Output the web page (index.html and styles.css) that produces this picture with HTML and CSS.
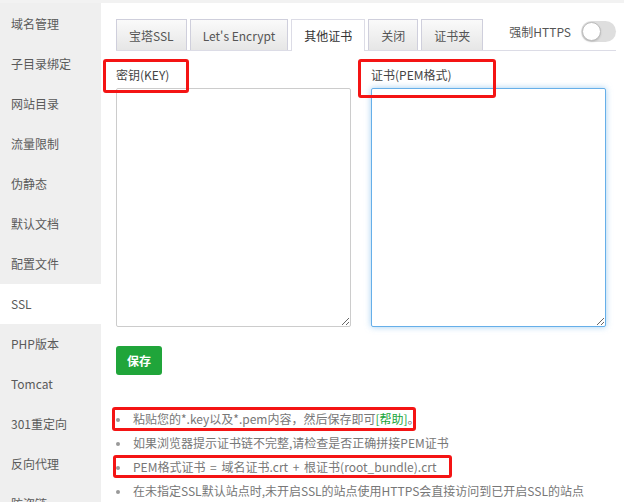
FILE: index.html
```html
<!DOCTYPE html>
<html lang="zh-cn">
<head>
    <meta charset="UTF-8">
    <meta name="viewport" content="width=device-width, initial-scale=1.0">
    <title>站点设置 - SSL</title>
    <link rel="stylesheet" href="styles.css">
</head>
<body>

    <div class="page">
        <!-- 左侧菜单 -->
        <ul class="sidebar">
            <li>域名管理</li>
            <li>子目录绑定</li>
            <li>网站目录</li>
            <li>流量限制</li>
            <li>伪静态</li>
            <li>默认文档</li>
            <li>配置文件</li>
            <li class="active">SSL</li>
            <li>PHP版本</li>
            <li>Tomcat</li>
            <li>301重定向</li>
            <li>反向代理</li>
            <li>防盗链</li>
        </ul>

        <div class="main">
            <div class="tab-bar">
                <span class="tab">宝塔SSL</span>
                <span class="tab">Let's Encrypt</span>
                <span class="tab active">其他证书</span>
                <span class="tab">关闭</span>
                <span class="tab">证书夹</span>
                <div class="force-https">
                    <span>强制HTTPS</span>
                    <span class="switch"><span class="knob"></span></span>
                </div>
            </div>

            <div class="cert-form">
                <div class="field">
                    <label class="field-label" for="key">密钥(KEY)<span class="mark mark-key"></span></label>
                    <textarea id="key"></textarea>
                </div>
                <div class="field">
                    <label class="field-label" for="csr">证书(PEM格式)<span class="mark mark-pem"></span></label>
                    <textarea id="csr" class="focused"></textarea>
                </div>
            </div>

            <button class="save-btn">保存</button>

            <ul class="tips">
                <li>粘贴您的*.key以及*.pem内容，然后保存即可<a href="#">[帮助]</a>。<span class="mark mark-tip1"></span></li>
                <li>如果浏览器提示证书链不完整,请检查是否正确拼接PEM证书</li>
                <li>PEM格式证书 = 域名证书.crt + 根证书(root_bundle).crt<span class="mark mark-tip3"></span></li>
                <li>在未指定SSL默认站点时,未开启SSL的站点使用HTTPS会直接访问到已开启SSL的站点</li>
            </ul>
        </div>
    </div>

</body>
</html>
```

FILE: styles.css
```css
html, body {
    margin: 0;
    padding: 0;
    height: 100%;
}
body {
    font-family: "Noto Sans CJK SC", "Open Sans", sans-serif;
    font-size: 12px;
    color: #555;
    background-color: #fff;
}
.page {
    display: flex;
    height: 100vh;
    overflow: hidden;
    border-top: 3px solid #f2f2f2;
    box-sizing: border-box;
}
.sidebar {
    width: 101px;
    flex-shrink: 0;
    margin: 0;
    padding: 1px 0 0 0;
    list-style: none;
    background-color: #efefef;
}
.sidebar li {
    height: 40px;
    line-height: 40px;
    padding-left: 11px;
    color: #5a5a5a;
}
.sidebar li.active {
    background-color: #fff;
}
.main {
    flex: 1;
    padding: 16px 8px 0 15px;
}
.tab-bar {
    display: flex;
    align-items: flex-end;
    border-bottom: 1px solid #dcdce6;
    height: 31px;
}
.tab {
    height: 31px;
    line-height: 31px;
    padding: 0 12px;
    margin-right: 3px;
    border: 1px solid #cfcfdc;
    border-bottom: none;
    background: linear-gradient(#fafafa, #e6e6e6);
    color: #555;
    box-sizing: border-box;
}
.tab.active {
    background: #fff;
    border-color: #dcdce6;
    height: 32px;
    margin-bottom: -1px;
    color: #333;
}
.force-https {
    margin-left: auto;
    align-self: center;
    display: flex;
    align-items: center;
    gap: 10px;
    color: #555;
    margin-bottom: 6px;
}
.switch {
    position: relative;
    display: inline-block;
    width: 35px;
    height: 21px;
    border-radius: 11px;
    background-color: #dedede;
}
.knob {
    position: absolute;
    left: 1px;
    top: 1px;
    width: 17px;
    height: 17px;
    border-radius: 50%;
    background-color: #fff;
    border: 1px solid #bbb;
    box-shadow: 0 1px 2px rgba(0,0,0,0.15);
}
.cert-form {
    display: flex;
    gap: 20px;
    padding-top: 14px;
}
.field {
    width: 235px;
}
.field-label {
    position: relative;
    display: block;
    line-height: 20px;
    height: 20px;
    margin-bottom: 3px;
    color: #444;
}
.field textarea {
    display: block;
    width: 235px;
    height: 239px;
    box-sizing: border-box;
    border: 1px solid #ccc;
    border-radius: 2px;
    margin: 0;
    padding: 4px;
    font-family: inherit;
}
.field textarea.focused {
    border-color: #66afe9;
    outline: none;
    box-shadow: 0 0 6px rgba(102,175,233,0.6);
}
.save-btn {
    display: block;
    margin-top: 19px;
    height: 29px;
    padding: 0 11px;
    border: none;
    border-radius: 3px;
    background-color: #20a53a;
    color: #fff;
    font-family: inherit;
    font-size: 12px;
    font-weight: bold;
    cursor: pointer;
}
.tips {
    list-style: none;
    margin: 32px 0 0 0;
    padding: 0;
}
.tips li {
    position: relative;
    line-height: 24px;
    padding-left: 17px;
    color: #777;
    white-space: nowrap;
    word-spacing: 2px;
}
.tips li::before {
    content: "";
    position: absolute;
    left: 0;
    top: 11px;
    width: 4px;
    height: 4px;
    border-radius: 50%;
    background-color: #999;
}
.tips a {
    color: #20a53a;
    text-decoration: none;
}
/* 红色标注框 */
.mark {
    position: absolute;
    border: 3px solid #f41414;
    border-radius: 3px;
    box-sizing: border-box;
    pointer-events: none;
}
.mark-key {
    left: -13px;
    top: -6px;
    width: 86px;
    height: 34px;
}
.mark-pem {
    left: -13px;
    top: -6px;
    width: 138px;
    height: 39px;
}
.mark-tip1 {
    left: -4px;
    top: 0;
    width: 304px;
    height: 24px;
}
.mark-tip3 {
    left: -3px;
    top: 0;
    width: 339px;
    height: 23px;
}
```
